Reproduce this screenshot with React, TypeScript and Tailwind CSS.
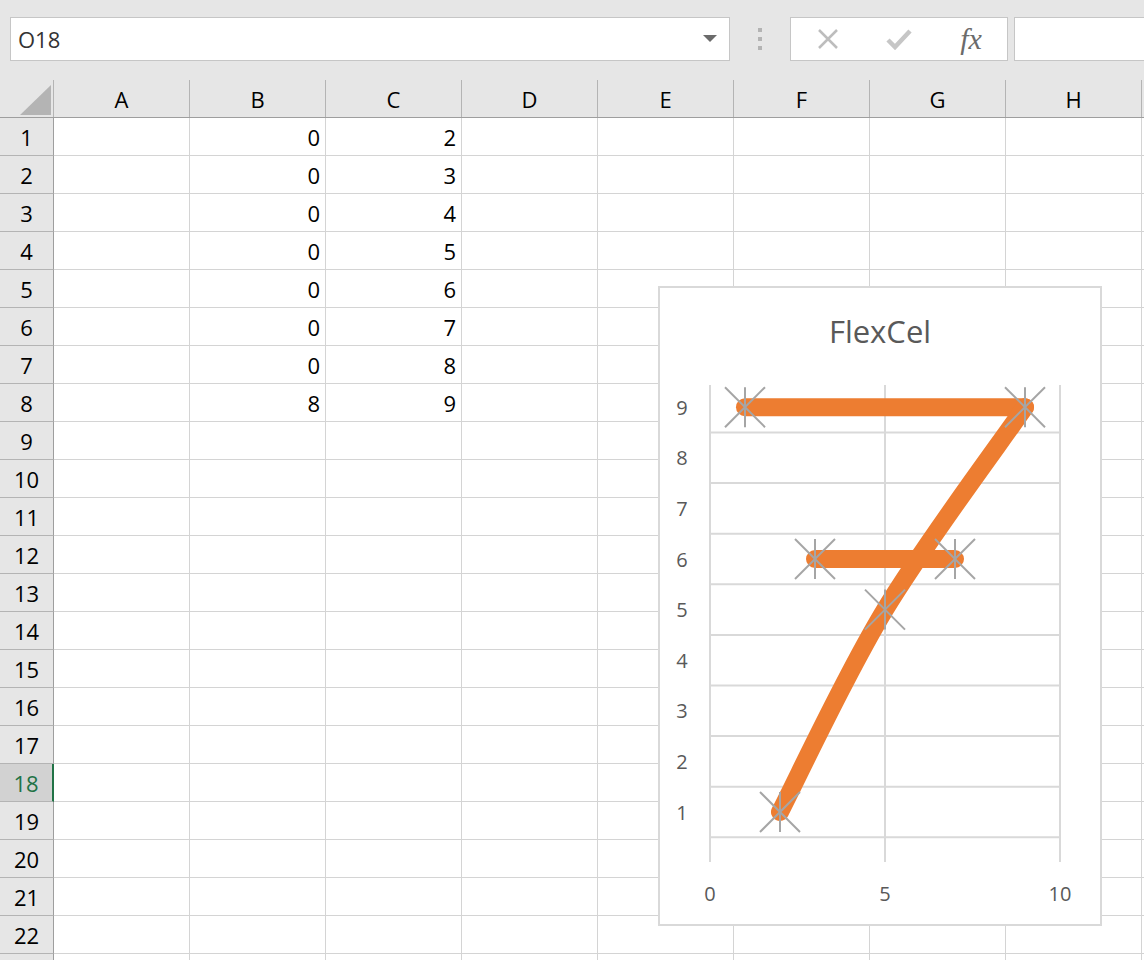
import React from "react"

const COLS = ["A", "B", "C", "D", "E", "F", "G", "H"]
const ROW_COUNT = 23
const SELECTED_ROW = 18

// values in columns B and C, rows 1..8
const DATA: Record<number, { B: number; C: number }> = {
  1: { B: 0, C: 2 },
  2: { B: 0, C: 3 },
  3: { B: 0, C: 4 },
  4: { B: 0, C: 5 },
  5: { B: 0, C: 6 },
  6: { B: 0, C: 7 },
  7: { B: 0, C: 8 },
  8: { B: 8, C: 9 },
}

// chart mapping (page coordinates, the svg viewBox is aligned to the page)
const px = (v: number) => 710 + v * 35
const py = (v: number) => 813 - (v - 1) * 50.6

const POINTS: [number, number][] = [
  [1, 9],
  [9, 9],
  [5, 5],
  [2, 1],
  [3, 6],
  [7, 6],
]

function Marker({ x, y }: { x: number; y: number }) {
  return (
    <g stroke="#a5a5a5" strokeWidth={2}>
      <line x1={x - 20} y1={y - 20} x2={x + 20} y2={y + 20} />
      <line x1={x - 20} y1={y + 20} x2={x + 20} y2={y - 20} />
      <line x1={x} y1={y - 20} x2={x} y2={y + 20} />
    </g>
  )
}

function Chart() {
  const p0 = [px(2), py(1)]
  const p1 = [px(5), py(5)]
  const p2 = [px(9), py(9)]
  // smoothed line through three points
  const c1 = [p0[0] + (p1[0] - p0[0]) / 6, p0[1] + (p1[1] - p0[1]) / 6]
  const c2 = [p1[0] - (p2[0] - p0[0]) / 6, p1[1] - (p2[1] - p0[1]) / 6]
  const c3 = [p1[0] + (p2[0] - p0[0]) / 6, p1[1] + (p2[1] - p0[1]) / 6]
  const c4 = [p2[0] - (p2[0] - p1[0]) / 6, p2[1] - (p2[1] - p1[1]) / 6]
  const curve = `M${p0[0]},${p0[1]} C${c1[0]},${c1[1]} ${c2[0]},${c2[1]} ${p1[0]},${p1[1]} C${c3[0]},${c3[1]} ${c4[0]},${c4[1]} ${p2[0]},${p2[1]}`

  return (
    <div className="absolute left-[658px] top-[286px] w-[444px] h-[640px] border-2 border-[#d9d9d9] bg-white flex flex-col">
      <div className="pt-[19px] leading-[48px] text-[31px] text-center text-[#595959]">FlexCel</div>
      <svg className="w-[440px] h-[568px]" viewBox="660 356 440 568">
        {/* grid */}
        <g stroke="#d9d9d9" strokeWidth={2}>
          {[0, 5, 10].map((v) => (
            <line key={v} x1={px(v)} y1={386} x2={px(v)} y2={863} />
          ))}
          {[0.5, 1.5, 2.5, 3.5, 4.5, 5.5, 6.5, 7.5, 8.5].map((v) => (
            <line key={v} x1={709} y1={py(v)} x2={1061} y2={py(v)} />
          ))}
        </g>
        {/* axis labels */}
        <g fill="#595959" fontSize={20} fontFamily="'Open Sans', sans-serif">
          {[1, 2, 3, 4, 5, 6, 7, 8, 9].map((v) => (
            <text key={v} x={682} y={py(v)} textAnchor="middle" dominantBaseline="central">
              {v}
            </text>
          ))}
          {[0, 5, 10].map((v) => (
            <text key={v} x={px(v)} y={894} textAnchor="middle" dominantBaseline="central">
              {v}
            </text>
          ))}
        </g>
        {/* series */}
        <g stroke="#ed7d31" strokeWidth={18} strokeLinecap="round" strokeLinejoin="round" fill="none">
          <line x1={px(1)} y1={py(9)} x2={px(9)} y2={py(9)} />
          <path d={curve} />
          <line x1={px(3)} y1={py(6)} x2={px(7)} y2={py(6)} />
        </g>
        {POINTS.map(([x, y]) => (
          <Marker key={`${x}-${y}`} x={px(x)} y={py(y)} />
        ))}
      </svg>
    </div>
  )
}

function FormulaBar() {
  return (
    <div className="h-[80px] flex items-start pt-[17px] bg-[#e6e6e6]">
      {/* Name box */}
      <div className="ml-[10px] w-[720px] h-[44px] bg-white border border-[#c6c6c6] flex items-center justify-between pl-[7px] pr-[12px]">
        <span className="text-[22px] text-[#333333]">O18</span>
        <svg width="14" height="8" viewBox="0 0 14 8">
          <path d="M0 0 L14 0 L7 7 Z" fill="#6b6b6b" />
        </svg>
      </div>
      <div className="w-[60px] h-[44px] flex flex-col items-center justify-center gap-[5px]">
        <div className="w-[4px] h-[4px] bg-[#b3b3b3]" />
        <div className="w-[4px] h-[4px] bg-[#b3b3b3]" />
        <div className="w-[4px] h-[4px] bg-[#b3b3b3]" />
      </div>
      {/* cancel / enter / function */}
      <div className="w-[218px] h-[44px] bg-white border border-[#c6c6c6] flex items-center">
        <div className="w-[72px] flex justify-center pl-[2px]">
          <svg width="22" height="22" viewBox="0 0 22 22">
            <path d="M2 2 L20 20 M20 2 L2 20" stroke="#bdbdbd" strokeWidth="2.5" />
          </svg>
        </div>
        <div className="w-[72px] flex justify-center">
          <svg width="26" height="22" viewBox="0 0 26 22">
            <path d="M2 12 L9 19 L24 3" stroke="#c6c6c6" strokeWidth="4.5" fill="none" />
          </svg>
        </div>
        <div className="w-[72px] flex justify-center">
          <span className="font-['Liberation_Serif',serif] italic text-[30px] leading-none text-[#6b6b6b]">fx</span>
        </div>
      </div>
      <div className="ml-[6px] flex-1 h-[44px] bg-white border border-r-0 border-[#c6c6c6]" />
    </div>
  )
}

function Sheet() {
  return (
    <div>
      {/* column headers */}
      <div className="grid grid-cols-[54px_repeat(8,136px)_1fr] h-[38px] bg-[#e6e6e6] border-b border-[#9e9e9e]">
        <div className="border-r border-[#b4b4b4] relative">
          <svg className="absolute left-[20px] top-[5px]" width="31" height="30" viewBox="0 0 31 30">
            <path d="M31 0 L31 30 L0 30 Z" fill="#b4b4b4" />
          </svg>
        </div>
        {COLS.map((c) => (
          <div key={c} className="border-r border-[#b4b4b4] flex items-center justify-center pt-[1px] text-[22px] text-black">
            {c}
          </div>
        ))}
        <div />
      </div>
      {Array.from({ length: ROW_COUNT }, (_, i) => i + 1).map((r) => {
        const selected = r === SELECTED_ROW
        const row = DATA[r]
        // the last row is only a sliver at the bottom edge, its number lies below the window
        const label = r < ROW_COUNT ? r : ""
        return (
          <div key={r} className="grid grid-cols-[54px_repeat(8,136px)_1fr] h-[38px]">
            <div
              className={
                selected
                  ? "bg-[#d2d2d2] border-r-2 border-r-[#217346] border-b border-b-[#b4b4b4] flex items-center justify-center pt-[2px] text-[22px] text-[#217346]"
                  : "bg-[#e6e6e6] border-r border-r-[#9e9e9e] border-b border-b-[#b4b4b4] flex items-center justify-center pt-[2px] text-[22px] text-black"
              }
            >
              {label}
            </div>
            {COLS.map((c) => (
              <div
                key={c}
                className="border-r border-b border-[#d4d4d4] flex items-center justify-end pr-[5px] pt-[2px] text-[22px] text-black"
              >
                {row && c === "B" ? row.B : row && c === "C" ? row.C : ""}
              </div>
            ))}
            <div className="border-b border-[#d4d4d4]" />
          </div>
        )
      })}
    </div>
  )
}

export default function App() {
  return (
    <div className="relative w-[1144px] h-[960px] overflow-hidden bg-white font-['Open_Sans',sans-serif]">
      <FormulaBar />
      <Sheet />
      <Chart />
    </div>
  )
}
